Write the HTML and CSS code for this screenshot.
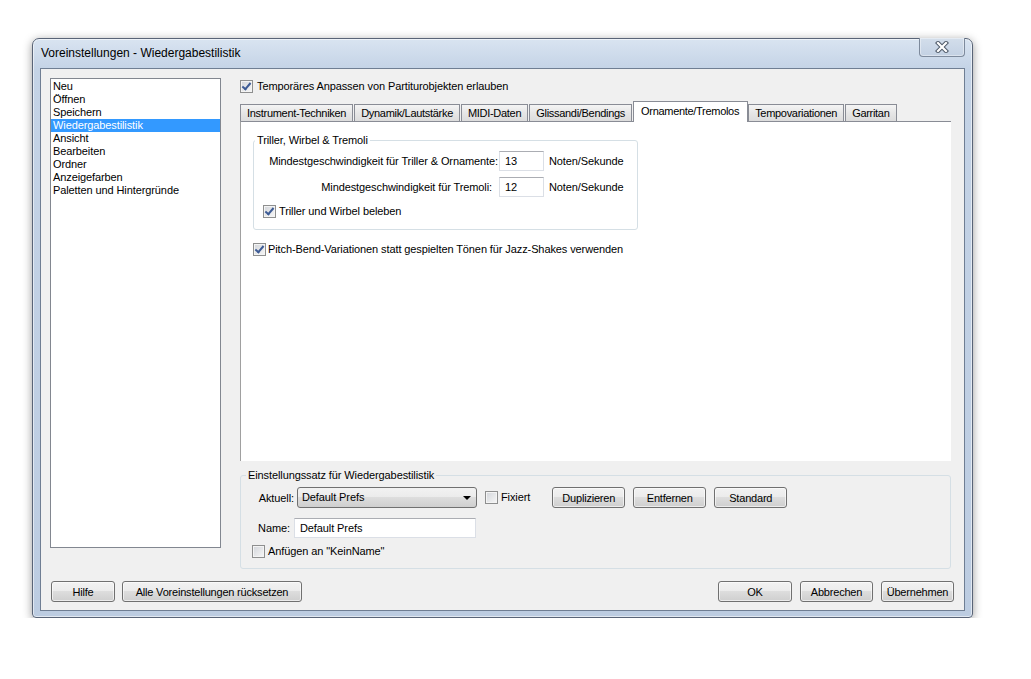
FILE: index.html
```html
<!DOCTYPE html>
<html>

<head>
  <meta charset="utf-8">
  <link rel="stylesheet" href="styles.css">
</head>

<body>

  <div class="window">
    <div class="titlebar">
      <span class="title">Voreinstellungen - Wiedergabestilistik</span>
      <span class="close-button">
        <svg width="14" height="12" viewBox="0 0 14 12">
          <path d="M3 2 L11 10 M11 2 L3 10" stroke="#4f5a69" stroke-width="4.2" stroke-linecap="square" fill="none" />
          <path d="M3 2 L11 10 M11 2 L3 10" stroke="#ffffff" stroke-width="2.2" stroke-linecap="square" fill="none" />
        </svg>
      </span>
    </div>

    <div class="client">
      <div class="main">
        <ul class="category-list">
          <li>Neu</li>
          <li>Öffnen</li>
          <li>Speichern</li>
          <li class="selected">Wiedergabestilistik</li>
          <li>Ansicht</li>
          <li>Bearbeiten</li>
          <li>Ordner</li>
          <li>Anzeigefarben</li>
          <li>Paletten und Hintergründe</li>
        </ul>

        <div class="settings">
          <label class="check-row top-check"><span class="checkbox checked"></span>Temporäres Anpassen von Partiturobjekten erlauben</label>

          <div class="tabs">
            <div class="tab">Instrument-Techniken</div>
            <div class="tab">Dynamik/Lautstärke</div>
            <div class="tab">MIDI-Daten</div>
            <div class="tab">Glissandi/Bendings</div>
            <div class="tab active">Ornamente/Tremolos</div>
            <div class="tab">Tempovariationen</div>
            <div class="tab">Garritan</div>
          </div>

          <div class="tab-panel">
            <fieldset class="group trill-group">
              <legend>Triller, Wirbel &amp; Tremoli</legend>
              <div class="speed-row">
                <span class="speed-label">Mindestgeschwindigkeit für Triller &amp; Ornamente:</span>
                <span class="field speed-field">13</span>
                <span class="unit">Noten/Sekunde</span>
              </div>
              <div class="speed-row">
                <span class="speed-label short">Mindestgeschwindigkeit für Tremoli:</span>
                <span class="field speed-field">12</span>
                <span class="unit">Noten/Sekunde</span>
              </div>
              <label class="check-row trill-check"><span class="checkbox checked"></span>Triller und Wirbel beleben</label>
            </fieldset>

            <label class="check-row pitch-check"><span class="checkbox checked"></span>Pitch-Bend-Variationen statt gespielten Tönen für Jazz-Shakes verwenden</label>
          </div>

          <fieldset class="group set-group">
            <legend>Einstellungssatz für Wiedergabestilistik</legend>
            <div class="set-row">
              <span class="set-label">Aktuell:</span>
              <div class="combo">Default Prefs<span class="combo-arrow"></span></div>
              <label class="check-row fix-check"><span class="checkbox"></span>Fixiert</label>
              <button class="btn dup-btn">Duplizieren</button>
              <button class="btn">Entfernen</button>
              <button class="btn">Standard</button>
            </div>
            <div class="set-row name-row">
              <span class="set-label">Name:</span>
              <span class="field name-field">Default Prefs</span>
            </div>
            <label class="check-row append-check"><span class="checkbox"></span>Anfügen an "KeinName"</label>
          </fieldset>
        </div>
      </div>

      <div class="footer">
        <button class="btn help-btn">Hilfe</button>
        <button class="btn reset-btn">Alle Voreinstellungen rücksetzen</button>
        <span class="spacer"></span>
        <button class="btn ok-btn">OK</button>
        <button class="btn">Abbrechen</button>
        <button class="btn">Übernehmen</button>
      </div>
    </div>
  </div>

</body>

</html>
```

FILE: styles.css
```css
* {
  box-sizing: border-box;
}

body {
  margin: 0;
  background-color: white;
  font-family: "Liberation Sans", Arial, sans-serif;
  font-size: 11px;
  letter-spacing: -0.1px;
  color: #000;
}

.window {
  margin: 38px 0 0 32px;
  width: 941px;
  height: 580px;
  padding: 0 7px 7px 7px;
  border: 1px solid #596477;
  border-radius: 7px 7px 4px 4px;
  background: linear-gradient(#d9e4f1, #c4d3e6 30px, #bccce1);
  box-shadow: 0 2px 10px rgba(0, 0, 0, 0.4), inset 0 0 0 1px rgba(255, 255, 255, 0.55);
}

.titlebar {
  display: flex;
  height: 29px;
}

.title {
  padding: 7px 0 0 1px;
  font-size: 12px;
  letter-spacing: 0;
  color: #000;
}

.close-button {
  display: flex;
  justify-content: center;
  align-items: center;
  margin-left: auto;
  width: 46px;
  height: 19px;
  margin-top: -1px;
  border: 1px solid #7d8a9c;
  border-top: none;
  border-radius: 0 0 4px 4px;
  background: linear-gradient(#d3deeb, #c3d1e3);
  box-shadow: inset 0 0 0 1px rgba(255, 255, 255, 0.4);
}

.client {
  display: flex;
  flex-direction: column;
  height: 543px;
  border: 1px solid #6f7e93;
  background-color: #f0f0f0;
}

.main {
  display: flex;
  padding: 9px 0 0 9px;
}

.category-list {
  width: 171px;
  height: 470px;
  margin: 0;
  padding: 1px 0 0 0;
  list-style: none;
  background-color: white;
  border: 1px solid #828790;
}

.category-list li {
  height: 13px;
  line-height: 13px;
  padding-left: 2px;
}

.category-list li.selected {
  background-color: #3399ff;
  color: white;
}

.settings {
  width: 711px;
  margin-left: 19px;
}

.check-row {
  display: flex;
  align-items: center;
  height: 13px;
  line-height: 13px;
  white-space: nowrap;
}

.checkbox {
  position: relative;
  display: inline-block;
  flex-shrink: 0;
  width: 13px;
  height: 13px;
  margin-right: 3px;
  border: 1px solid #8e8f8f;
  background: linear-gradient(135deg, #d2d5da, #f7f7f7);
  box-shadow: inset 0 0 0 1px #f4f4f4;
}

.checkbox.checked::after {
  content: "";
  position: absolute;
  left: 3px;
  top: 0px;
  width: 3px;
  height: 7px;
  border: solid #3d5b95;
  border-width: 0 2px 2px 0;
  transform: rotate(40deg);
}

.top-check {
  margin-top: 2px;
}

.top-check .checkbox {
  margin-right: 4px;
}

.tabs {
  display: flex;
  align-items: flex-end;
  height: 20px;
  margin-top: 8px;
}

.tab {
  height: 17px;
  line-height: 16px;
  padding: 0 6px;
  margin-right: 1px;
  letter-spacing: -0.3px;
  border: 1px solid #898c95;
  border-bottom: none;
  background: linear-gradient(#f4f4f4, #e6e6e6 50%, #dcdcdc);
  white-space: nowrap;
}

.tab.active {
  position: relative;
  z-index: 1;
  height: 21px;
  line-height: 18px;
  padding: 0 8px 0 7px;
  margin: 0 0 -1px 0;
  background: white;
}

.tab-panel {
  height: 340px;
  padding: 12px 0 0 12px;
  background-color: white;
  border-top: 1px solid #898c95;
  border-left: 1px solid #a0a0a0;
}

.group {
  margin: 0;
  padding: 0;
  min-width: 0;
  border: 1px solid #d5dfe5;
  border-radius: 3px;
}

.group legend {
  margin-left: 1px;
  padding: 0 2px;
  line-height: 13px;
}

.trill-group {
  width: 385px;
  height: 96px;
}

.speed-row {
  display: flex;
  align-items: center;
  height: 20px;
  margin-top: 4px;
}

.speed-row + .speed-row {
  margin-top: 6px;
}

.speed-label {
  width: 244px;
  text-align: right;
  white-space: nowrap;
}

.speed-label.short {
  padding-right: 6px;
}

.field {
  display: inline-block;
  height: 20px;
  line-height: 18px;
  padding-left: 5px;
  background-color: white;
  border: 1px solid #dbdfe6;
  border-top-color: #abadb3;
}

.speed-field {
  width: 45px;
  margin-left: 1px;
}

.unit {
  margin-left: 5px;
}

.trill-check {
  margin: 8px 0 0 9px;
}

.pitch-check {
  margin-top: 13px;
}

.pitch-check .checkbox {
  margin-right: 2px;
}

.set-group {
  height: 100px;
  margin-top: 8px;
  padding: 0 0 0 17px;
}

.set-group legend {
  margin-left: -12px;
}

.set-row {
  display: flex;
  align-items: center;
  height: 21px;
  margin-top: 5px;
}

.set-label {
  width: 36px;
  text-align: right;
  white-space: nowrap;
}

.combo {
  position: relative;
  width: 180px;
  height: 21px;
  line-height: 19px;
  margin-left: 3px;
  padding-left: 4px;
  border: 1px solid #707070;
  border-radius: 3px;
  background: linear-gradient(#f2f2f2, #ebebeb 50%, #dddddd 50%, #cfcfcf);
}

.combo-arrow {
  position: absolute;
  right: 5px;
  top: 8px;
  border-left: 4px solid transparent;
  border-right: 4px solid transparent;
  border-top: 4px solid #000;
}

.fix-check {
  margin-left: 8px;
}

.btn {
  height: 21px;
  min-width: 73px;
  padding: 0 4px;
  margin-left: 8px;
  font-family: inherit;
  font-size: 11px;
  letter-spacing: -0.2px;
  color: #000;
  border: 1px solid #707070;
  border-radius: 3px;
  background: linear-gradient(#f2f2f2, #ebebeb 50%, #dddddd 50%, #cfcfcf);
  box-shadow: inset 0 0 0 1px rgba(255, 255, 255, 0.6);
}

.dup-btn {
  margin-left: 22px;
}

.name-row {
  margin-top: 9px;
}

.name-row .set-label {
  width: 32px;
}

.name-field {
  width: 182px;
  margin-left: 4px;
}

.append-check {
  margin: 7px 0 0 -6px;
}

.footer {
  display: flex;
  padding: 12px 10px 0 10px;
}

.footer .btn:first-child {
  margin-left: 0;
}

.help-btn {
  min-width: 64px;
}

.reset-btn {
  width: 180px;
  margin-left: 7px;
}

.ok-btn {
  min-width: 74px;
}

.spacer {
  flex: 1;
}
```
